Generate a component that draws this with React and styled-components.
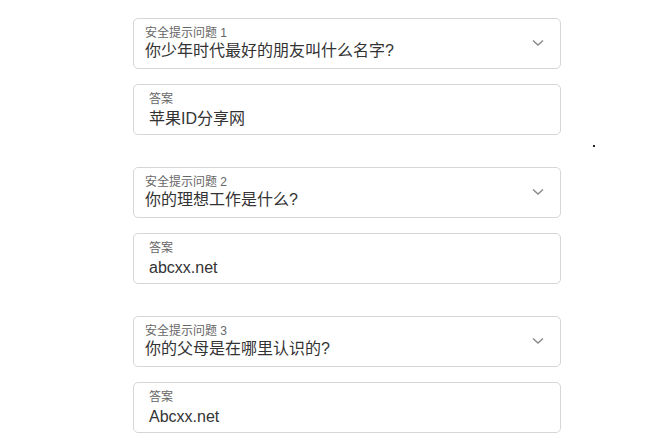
import React from 'react';
import styled, { createGlobalStyle } from 'styled-components';

const Global = createGlobalStyle`
  body {
    margin: 0;
    background: #fff;
    font-family: "Liberation Sans", "Noto Sans CJK SC", sans-serif;
  }
`;

const Page = styled.div`
  position: relative;
  width: 660px;
  height: 440px;
  overflow: hidden;
  padding: 18px 0 0 133px;
  box-sizing: border-box;
`;

const Form = styled.div`
  width: 428px;
  display: flex;
  flex-direction: column;
  gap: 32px;
`;

const Group = styled.div`
  display: flex;
  flex-direction: column;
  gap: 15px;
`;

const Field = styled.div`
  position: relative;
  height: 51px;
  box-sizing: border-box;
  border: 1px solid #d6d6d6;
  border-radius: 5px;
  padding: ${(p) => (p.$answer ? '7px 40px 0 15px' : '7px 40px 0 11px')};
  display: flex;
  flex-direction: column;
`;

const Label = styled.div`
  font-size: 12px;
  line-height: 14px;
  color: #666;
`;

const Value = styled.div`
  font-size: 16px;
  line-height: 22px;
  color: #333;
  margin-top: ${(p) => (p.$answer ? '2px' : '0')};
`;

const Chevron = styled.svg`
  position: absolute;
  right: 15px;
  top: 19px;
`;

const Dot = styled.div`
  position: absolute;
  left: 593px;
  top: 145px;
  width: 2px;
  height: 2px;
  background: #222;
`;

const items = [
  { n: 1, q: '你少年时代最好的朋友叫什么名字?', a: '苹果ID分享网' },
  { n: 2, q: '你的理想工作是什么?', a: 'abcxx.net' },
  { n: 3, q: '你的父母是在哪里认识的?', a: 'Abcxx.net' },
];

export default function App() {
  return (
    <Page>
      <Global />
      <Form>
        {items.map((it) => (
          <Group key={it.n}>
            <Field>
              <Label>安全提示问题 {it.n}</Label>
              <Value>{it.q}</Value>
              <Chevron width="14" height="10" viewBox="0 0 14 10">
                <path d="M2 2.5 L7 7 L12 2.5" fill="none" stroke="#888" strokeWidth="1.4" />
              </Chevron>
            </Field>
            <Field $answer>
              <Label>答案</Label>
              <Value $answer>{it.a}</Value>
            </Field>
          </Group>
        ))}
      </Form>
      <Dot />
    </Page>
  );
}
